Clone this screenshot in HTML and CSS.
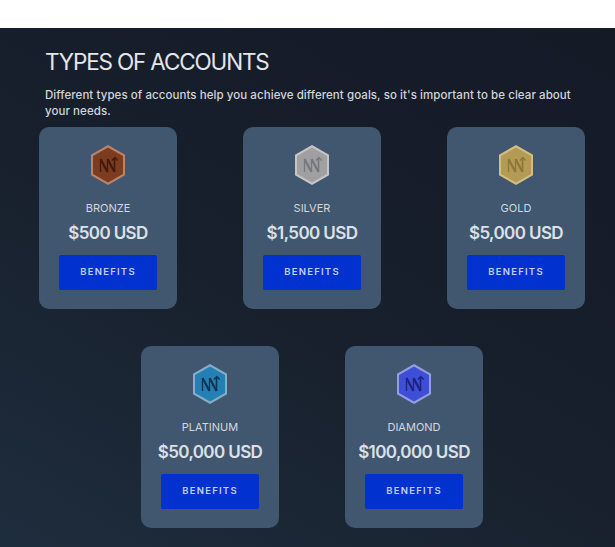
FILE: index.html
```html
<!DOCTYPE html>
<html lang="en">
<head>
<meta charset="utf-8">
<title>Types of accounts</title>
<link rel="stylesheet" href="styles.css">
</head>
<body>
<svg class="defs" width="0" height="0" aria-hidden="true">
  <defs>
    <g id="mark" fill="none">
      <path d="M10.5 28V15.5" stroke-width="1.3"/>
      <path d="M10.5 15L17.5 28" stroke-width="2.2"/>
      <path d="M17.5 28V15.5" stroke-width="1.3"/>
      <path d="M17.5 15L24.5 28" stroke-width="2.2"/>
      <path d="M24.5 28V14.5" stroke-width="1.6"/>
      <path d="M22 16.5L24.8 13.5L27.6 16.5" stroke-width="1.4"/>
    </g>
  </defs>
</svg>
<main class="accounts">
  <h1 class="title">TYPES OF ACCOUNTS</h1>
  <p class="intro">Different types of accounts help you achieve different goals, so it's important to be clear about your needs.</p>
  <div class="cards">
    <article class="card">
      <svg class="badge bronze" viewBox="0 0 36 42"><polygon class="edge" points="18,1 35,10.75 35,31.25 18,41 1,31.25 1,10.75"/><polygon class="core" points="18,3.5 33,12 33,30 18,38.5 3,30 3,12"/><use href="#mark"/></svg>
      <h2 class="tier">BRONZE</h2>
      <p class="price">$500 USD</p>
      <a class="btn">BENEFITS</a>
    </article>
    <article class="card">
      <svg class="badge silver" viewBox="0 0 36 42"><polygon class="edge" points="18,1 35,10.75 35,31.25 18,41 1,31.25 1,10.75"/><polygon class="core" points="18,3.5 33,12 33,30 18,38.5 3,30 3,12"/><use href="#mark"/></svg>
      <h2 class="tier">SILVER</h2>
      <p class="price">$1,500 USD</p>
      <a class="btn">BENEFITS</a>
    </article>
    <article class="card">
      <svg class="badge gold" viewBox="0 0 36 42"><polygon class="edge" points="18,1 35,10.75 35,31.25 18,41 1,31.25 1,10.75"/><polygon class="core" points="18,3.5 33,12 33,30 18,38.5 3,30 3,12"/><use href="#mark"/></svg>
      <h2 class="tier">GOLD</h2>
      <p class="price">$5,000 USD</p>
      <a class="btn">BENEFITS</a>
    </article>
    <article class="card">
      <svg class="badge platinum" viewBox="0 0 36 42"><polygon class="edge" points="18,1 35,10.75 35,31.25 18,41 1,31.25 1,10.75"/><polygon class="core" points="18,3.5 33,12 33,30 18,38.5 3,30 3,12"/><use href="#mark"/></svg>
      <h2 class="tier">PLATINUM</h2>
      <p class="price">$50,000 USD</p>
      <a class="btn">BENEFITS</a>
    </article>
    <article class="card">
      <svg class="badge diamond" viewBox="0 0 36 42"><polygon class="edge" points="18,1 35,10.75 35,31.25 18,41 1,31.25 1,10.75"/><polygon class="core" points="18,3.5 33,12 33,30 18,38.5 3,30 3,12"/><use href="#mark"/></svg>
      <h2 class="tier">DIAMOND</h2>
      <p class="price">$100,000 USD</p>
      <a class="btn">BENEFITS</a>
    </article>
  </div>
</main>
</body>
</html>
```
FILE: styles.css
```css
* { box-sizing: border-box; }
html, body { margin: 0; background: #fff; }
body { padding-top: 28px; font-family: Inter, "Liberation Sans", sans-serif; overflow: hidden; }
.defs { position: absolute; }
.accounts {
  height: 519px;
  padding: 20px 0 0 39px;
  background: linear-gradient(30deg, #1e2d3d 0%, #18202d 45%, #141a26 100%);
  color: #dfe3e8;
}
.title {
  margin: 0 0 0 6px;
  font-size: 22.5px;
  line-height: 28px;
  font-weight: 400;
  letter-spacing: -1.15px;
  color: #e4e6ea;
}
.intro {
  width: 545px;
  margin: 11px 0 0 6px;
  font-size: 11.5px;
  line-height: 16px;
  font-weight: 500;
  letter-spacing: 0.07px;
  color: #d2d5da;
}
.cards {
  display: flex;
  flex-wrap: wrap;
  justify-content: center;
  gap: 37px 66px;
  width: 546px;
  margin-top: 8px;
}
.card {
  display: flex;
  flex-direction: column;
  align-items: center;
  width: 138px;
  height: 182px;
  padding-top: 17px;
  border-radius: 10px;
  background: #41566f;
}
.badge { display: block; width: 36px; height: 42px; }
.bronze .edge { fill: #bb8468; }
.bronze .core { fill: #7c3c20; }
.bronze use { stroke: #43190b; }
.silver .edge { fill: #c6c6c6; }
.silver .core { fill: #a0a0a0; }
.silver use { stroke: #75787c; }
.gold .edge { fill: #d2be80; }
.gold .core { fill: #b39a55; }
.gold use { stroke: #8d7637; }
.platinum .edge { fill: #86aec9; }
.platinum .core { fill: #2480b4; }
.platinum use { stroke: #12334f; }
.diamond .edge { fill: #959ee3; }
.diamond .core { fill: #3f4ed6; }
.diamond use { stroke: #1b2280; }
.tier {
  margin: 15px 0 0;
  font-size: 11px;
  line-height: 14px;
  font-weight: 400;
  color: #d3d8df;
}
.price {
  margin: 7px 0 0;
  font-size: 17px;
  line-height: 22px;
  font-weight: 600;
  letter-spacing: -0.6px;
  color: #dde1e6;
}
.btn {
  display: flex;
  align-items: center;
  justify-content: center;
  width: 98px;
  height: 35px;
  margin-top: 11px;
  padding-bottom: 2px;
  border-radius: 2px;
  background: #0131cf;
  color: #c3d0f2;
  font-size: 9.5px;
  font-weight: 600;
  letter-spacing: 1.25px;
}
```
